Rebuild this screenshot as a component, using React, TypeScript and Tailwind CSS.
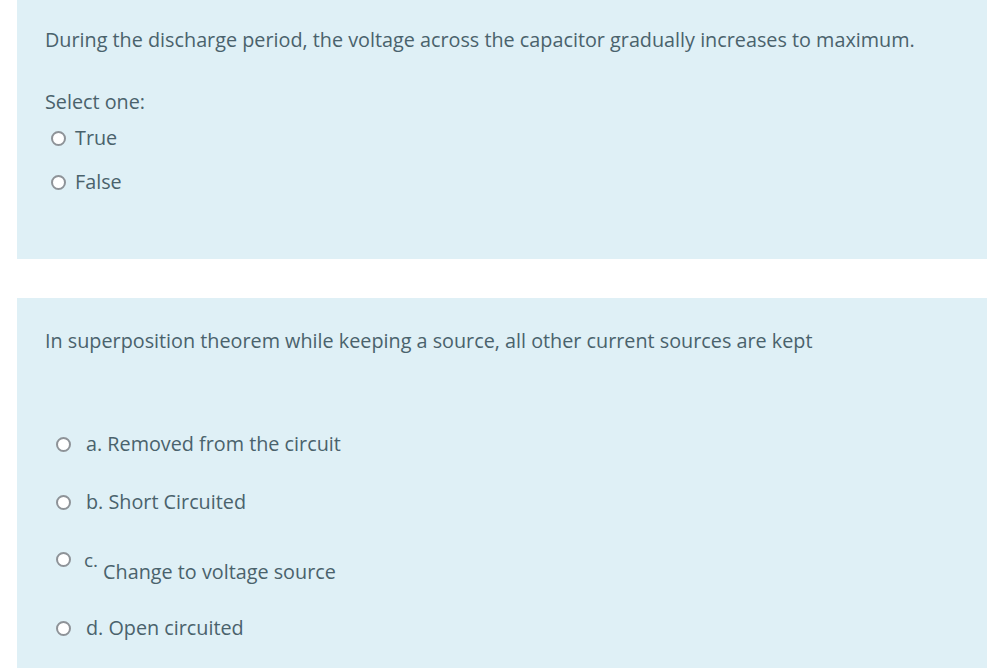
import React from "react";

const Radio = () => (
  <span className="inline-block w-[15px] h-[15px] rounded-full border-2 border-[#8e9398] bg-white shrink-0" />
);

export default function App() {
  return (
    <div
      className="w-[987px] h-[668px] bg-white pl-[17px] overflow-hidden text-[#4a626c]"
      style={{ fontFamily: '"Open Sans", "Noto Sans", sans-serif' }}
    >
      <div className="h-[259px] bg-[#dff0f6] pl-[28px] pt-[28px] text-[19.8px]">
        <p className="leading-[24px] h-[24px] whitespace-nowrap">
          During the discharge period, the voltage across the capacitor gradually increases to maximum.
        </p>
        <p className="leading-[24px] mt-[38px]">Select one:</p>
        <div className="flex flex-col gap-[20px] mt-[12px] pl-[6px]">
          <div className="flex items-center gap-[9px] h-[24px]">
            <Radio />
            <span className="leading-[24px]">True</span>
          </div>
          <div className="flex items-center gap-[9px] h-[24px]">
            <Radio />
            <span className="leading-[24px]">False</span>
          </div>
        </div>
      </div>
      <div className="mt-[39px] h-[400px] bg-[#dff0f6] pl-[28px] pt-[31px] text-[19.8px]">
        <p className="leading-[24px] h-[24px] whitespace-nowrap">
          In superposition theorem while keeping a source, all other current sources are kept
        </p>
        <div className="flex flex-col mt-[79px] pl-[11px]">
          <div className="flex items-center gap-[15px] h-[24px]">
            <Radio />
            <span className="leading-[24px]">a. Removed from the circuit</span>
          </div>
          <div className="flex items-center gap-[15px] h-[24px] mt-[34px]">
            <Radio />
            <span className="leading-[24px]">b. Short Circuited</span>
          </div>
          <div className="flex items-start gap-[13px] h-[36px] mt-[34px]">
            <div className="h-[22px] flex items-center">
              <Radio />
            </div>
            <div className="flex items-start">
              <span className="leading-[24px] text-[19px]">c.</span>
              <span className="leading-[24px] mt-[12px] ml-[5px]">Change to voltage source</span>
            </div>
          </div>
          <div className="flex items-center gap-[15px] h-[24px] mt-[32px]">
            <Radio />
            <span className="leading-[24px]">d. Open circuited</span>
          </div>
        </div>
      </div>
    </div>
  );
}
